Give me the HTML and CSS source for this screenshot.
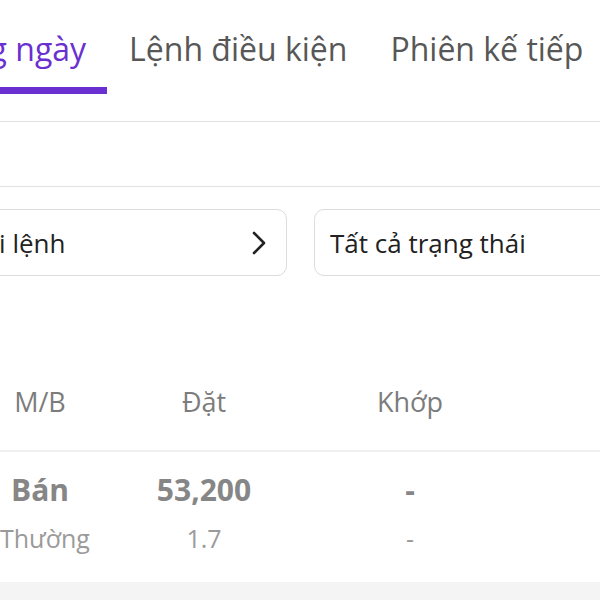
FILE: index.html
```html
<!DOCTYPE html>
<html lang="vi">
<head>
<meta charset="utf-8">
<link rel="stylesheet" href="styles.css">
</head>
<body>
<div class="page">
  <nav class="tabs">
    <div class="tab active">Lệnh trong ngày</div>
    <div class="tab">Lệnh điều kiện</div>
    <div class="tab">Phiên kế tiếp</div>
  </nav>
  <div class="spacer"></div>
  <div class="filters">
    <div class="select first">
      <span>Tất cả loại lệnh</span>
      <svg class="chev" width="14" height="24" viewBox="0 0 14 24"><path d="M2 2 L12 12 L2 22" fill="none" stroke="#222" stroke-width="2.6" stroke-linecap="round" stroke-linejoin="round"/></svg>
    </div>
    <div class="select second">
      <span>Tất cả trạng thái</span>
    </div>
  </div>
  <div class="table">
    <div class="thead">
      <div class="cell">M/B</div>
      <div class="cell">Đặt</div>
      <div class="cell">Khớp</div>
    </div>
    <div class="row">
      <div class="cell main">Bán</div>
      <div class="cell main">53,200</div>
      <div class="cell main">-</div>
      <div class="cell sub">Thường</div>
      <div class="cell sub">1.7</div>
      <div class="cell sub">-</div>
    </div>
  </div>
  <div class="footer-band"></div>
</div>
</body>
</html>
```

FILE: styles.css
```css
* { box-sizing: border-box; margin: 0; padding: 0; }
html, body { width: 600px; height: 600px; overflow: hidden; background: #fff; }
body { font-family: "Open Sans", "Noto Sans", sans-serif; }
.page { width: 600px; height: 600px; overflow: hidden; }

.tabs {
  display: flex;
  height: 122px;
  border-bottom: 1px solid #e2e2e2;
  margin-left: -177px;
  width: 777px;
  padding-top: 26px;
  align-items: flex-start;
}
.tab {
  font-size: 32px;
  color: #575757;
  white-space: nowrap;
  line-height: 46px;
  height: 68px;
  padding: 0 21px;
  margin-right: 1px;
  flex: none;
}
.tab.active {
  color: #6a2fd0;
  border-bottom: 7px solid #6a2fd0;
}

.spacer { height: 65px; border-bottom: 1px solid #e2e2e2; }

.filters {
  display: flex;
  gap: 27px;
  margin-left: -132px;
  width: 732px;
  padding-top: 22px;
  height: 183px;
}
.select {
  flex: none;
  height: 67px;
  border: 1px solid #dcdcdc;
  border-radius: 10px;
  display: flex;
  align-items: center;
  justify-content: space-between;
  font-size: 26px;
  color: #222;
  padding: 0 20px 0 15px;
  white-space: nowrap;
}
.select.first { width: 419px; }
.select.second { width: 320px; }
.chev { display: block; }

.table { width: 600px; }
.thead {
  display: grid;
  grid-template-columns: 80px 248px 164px;
  height: 82px;
  align-items: center;
  padding-bottom: 18px;
  border-bottom: 2px solid #f0f0f0;
  background: #fff;
}
.thead .cell { text-align: center; font-size: 27px; color: #7c7c7c; }
.row {
  display: grid;
  grid-template-columns: 80px 248px 164px;
  grid-template-rows: 40px 56px;
  align-items: center;
  padding-top: 18px;
  height: 130px;
}
.row .cell { text-align: center; white-space: nowrap; line-height: 1.2; }
.row .main { font-size: 30px; font-weight: 700; color: #868686; }
.row .sub { font-size: 25px; color: #9a9a9a; }
.footer-band { height: 40px; background: #f4f4f4; }
```
